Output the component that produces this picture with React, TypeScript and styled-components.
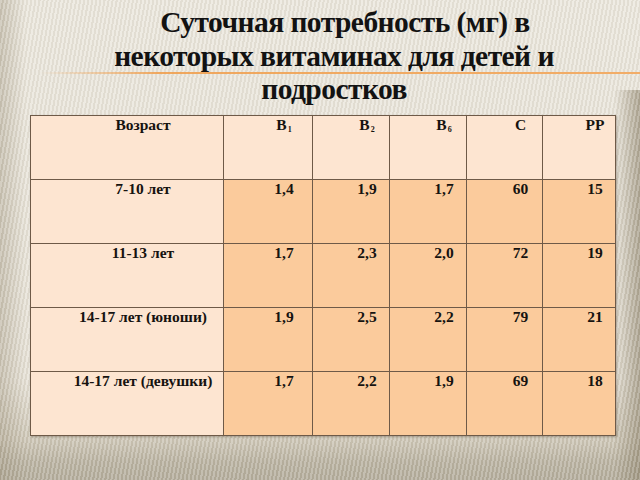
import React from 'react';
import styled, { createGlobalStyle } from 'styled-components';

const serif = `'Liberation Serif', 'Times New Roman', serif`;

const GlobalStyle = createGlobalStyle`
  html, body {
    margin: 0;
    padding: 0;
  }
  body {
    font-family: ${serif};
  }
`;

const Slide = styled.div`
  width: 640px;
  height: 480px;
  overflow: hidden;
  box-sizing: border-box;
  background:
    linear-gradient(to right, rgba(240, 160, 80, 0) 40px, rgba(240, 160, 80, 0.9) 160px, #f2ad68 100%) 0 72px / 100% 2px no-repeat,
    repeating-linear-gradient(100deg, rgba(255, 255, 255, 0.2) 0 2px, rgba(120, 110, 90, 0.08) 2px 4px),
    linear-gradient(to left, rgba(150, 140, 118, 0.75) 0, rgba(150, 140, 118, 0) 26px) right 90px / 40px 100% no-repeat,
    linear-gradient(to right, rgba(160, 150, 128, 0.45) 0, rgba(160, 150, 128, 0) 26px),
    linear-gradient(to bottom, #ebe7dd 0, #e6e1d6 380px, #cdc6b6 440px, #b9b2a1 462px, #b3ac9b 480px);
`;

const Title = styled.h1`
  margin: 0;
  padding: 6px 0 0 28px;
  font-family: ${serif};
  font-weight: bold;
  font-size: 29.5px;
  letter-spacing: -0.55px;
  line-height: 33.5px;
  color: #121212;
  text-align: center;
  text-indent: 22px;
`;

const Table = styled.table`
  margin: 8px 0 0 30px;
  width: 585px;
  table-layout: fixed;
  border-collapse: collapse;
  border: 1px solid #7a6552;
  box-shadow: 1px 1px 2px rgba(70, 55, 40, 0.35);
`;

const Cell = styled.td<{ $light?: boolean }>`
  height: 64px;
  box-sizing: border-box;
  padding: 0 4px 0 36px;
  border: 1px solid #6e5a48;
  background: ${({ $light }) => ($light ? '#fde5d1' : '#fbcb9c')};
  font-family: ${serif};
  font-weight: bold;
  font-size: 15.5px;
  line-height: 17px;
  color: #161310;
  text-align: center;
  vertical-align: top;
  white-space: nowrap;
`;

const Sub = styled.sub`
  font-size: 8px;
  vertical-align: -2px;
  margin-left: 1px;
`;

const widths = [193, 89, 77, 77, 76, 73];

const headers: React.ReactNode[] = [
  'Возраст',
  <>B<Sub>1</Sub></>,
  <>B<Sub>2</Sub></>,
  <>B<Sub>6</Sub></>,
  'C',
  'PP',
];

const rows: string[][] = [
  ['7-10 лет', '1,4', '1,9', '1,7', '60', '15'],
  ['11-13 лет', '1,7', '2,3', '2,0', '72', '19'],
  ['14-17 лет (юноши)', '1,9', '2,5', '2,2', '79', '21'],
  ['14-17 лет (девушки)', '1,7', '2,2', '1,9', '69', '18'],
];

export default function App() {
  return (
    <Slide>
      <GlobalStyle />
      <Title>
        Суточная потребность (мг) в
        <br />
        некоторых витаминах для детей и
        <br />
        подростков
      </Title>
      <Table>
        <colgroup>
          {widths.map((w, i) => (
            <col key={i} style={{ width: w }} />
          ))}
        </colgroup>
        <tbody>
          <tr>
            {headers.map((h, i) => (
              <Cell key={i} $light>
                {h}
              </Cell>
            ))}
          </tr>
          {rows.map((row) => (
            <tr key={row[0]}>
              {row.map((v, i) => (
                <Cell key={i} $light={i === 0}>
                  {v}
                </Cell>
              ))}
            </tr>
          ))}
        </tbody>
      </Table>
    </Slide>
  );
}
